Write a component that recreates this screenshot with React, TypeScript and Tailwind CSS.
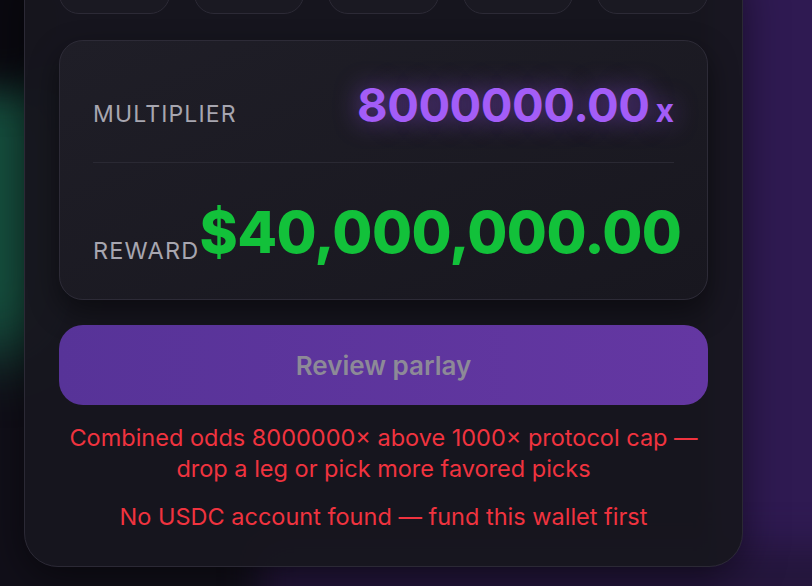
import React from "react";

export default function App() {
  return (
    <div
      className="relative w-[812px] h-[586px] overflow-hidden bg-[#110f19]"
      style={{ fontFamily: "Inter, 'Noto Sans', sans-serif" }}
    >
      {/* background glow */}
      <div className="pointer-events-none absolute -left-[60px] top-[60px] h-[300px] w-[120px] rounded-full bg-[#16503f] blur-[30px]" />
      <div className="pointer-events-none absolute -left-[60px] top-[-40px] h-[130px] w-[130px] rounded-full bg-[#0a0910] blur-[20px]" />
      <div className="pointer-events-none absolute right-[-30px] top-[-40px] h-[680px] w-[130px] bg-[#2f1a52] blur-[8px]" />
      <div className="pointer-events-none absolute left-[260px] bottom-[-30px] h-[70px] w-[600px] bg-[#24163c] blur-[18px]" />

      <div className="relative ml-[24px] w-[719px] -mt-[40px] flex flex-col rounded-[34px] border border-[#2b2935] bg-[#17161f]/95 px-[34px] pb-[34px] shadow-[0_10px_40px_rgba(0,0,0,0.5)]">
        {/* pills row */}
        <div className="grid grid-cols-5 gap-[24px]">
          {[0, 1, 2, 3, 4].map((i) => (
            <div
              key={i}
              className="h-[53px] rounded-[20px] border border-[#2c2a36] bg-[#1a1922]"
            />
          ))}
        </div>

        {/* card */}
        <div className="mt-[26px] rounded-[24px] border border-[#2d2b37] bg-gradient-to-br from-[#1f1e27] to-[#18171f] px-[33px] shadow-[0_12px_30px_rgba(0,0,0,0.45)]">
          <div className="flex items-baseline justify-between pt-[40px] pb-[34px]">
            <span className="text-[23px] leading-none tracking-[0.05em] text-[#a7a6b0]">
              MULTIPLIER
            </span>
            <span
              className="leading-none font-bold text-[#a35df7] whitespace-nowrap"
              style={{ textShadow: "0 0 24px rgba(150,80,240,0.6)" }}
            >
              <span className="text-[47px] tracking-[-0.01em]">8000000.00</span>
              <span className="ml-[6px] text-[32px]">x</span>
            </span>
          </div>
          <div className="h-px bg-[#2a2933]" />
          <div className="flex items-end justify-between pt-[40px] pb-[38px]">
            <span className="mb-[-1px] text-[23.5px] leading-none tracking-[0.05em] text-[#a7a6b0]">
              REWARD
            </span>
            <span className="text-[58px] leading-none font-extrabold tracking-[-0.01em] text-[#12c13a] whitespace-nowrap">
              $40,000,000.00
            </span>
          </div>
        </div>

        {/* button */}
        <button className="mt-[25px] flex h-[80px] items-center justify-center rounded-[24px] bg-gradient-to-r from-[#573398] to-[#6437a2] text-[26px] font-semibold text-[#8d8a97]">
          Review parlay
        </button>

        {/* errors */}
        <p className="mt-[17px] text-center text-[23.5px] leading-[31px] text-[#f0333f]">
          Combined odds 8000000× above 1000× protocol cap —
          <br />
          drop a leg or pick more favored picks
        </p>
        <p className="mt-[17px] text-center text-[23.5px] leading-[31px] text-[#f0333f]">
          No USDC account found — fund this wallet first
        </p>
      </div>
    </div>
  );
}
